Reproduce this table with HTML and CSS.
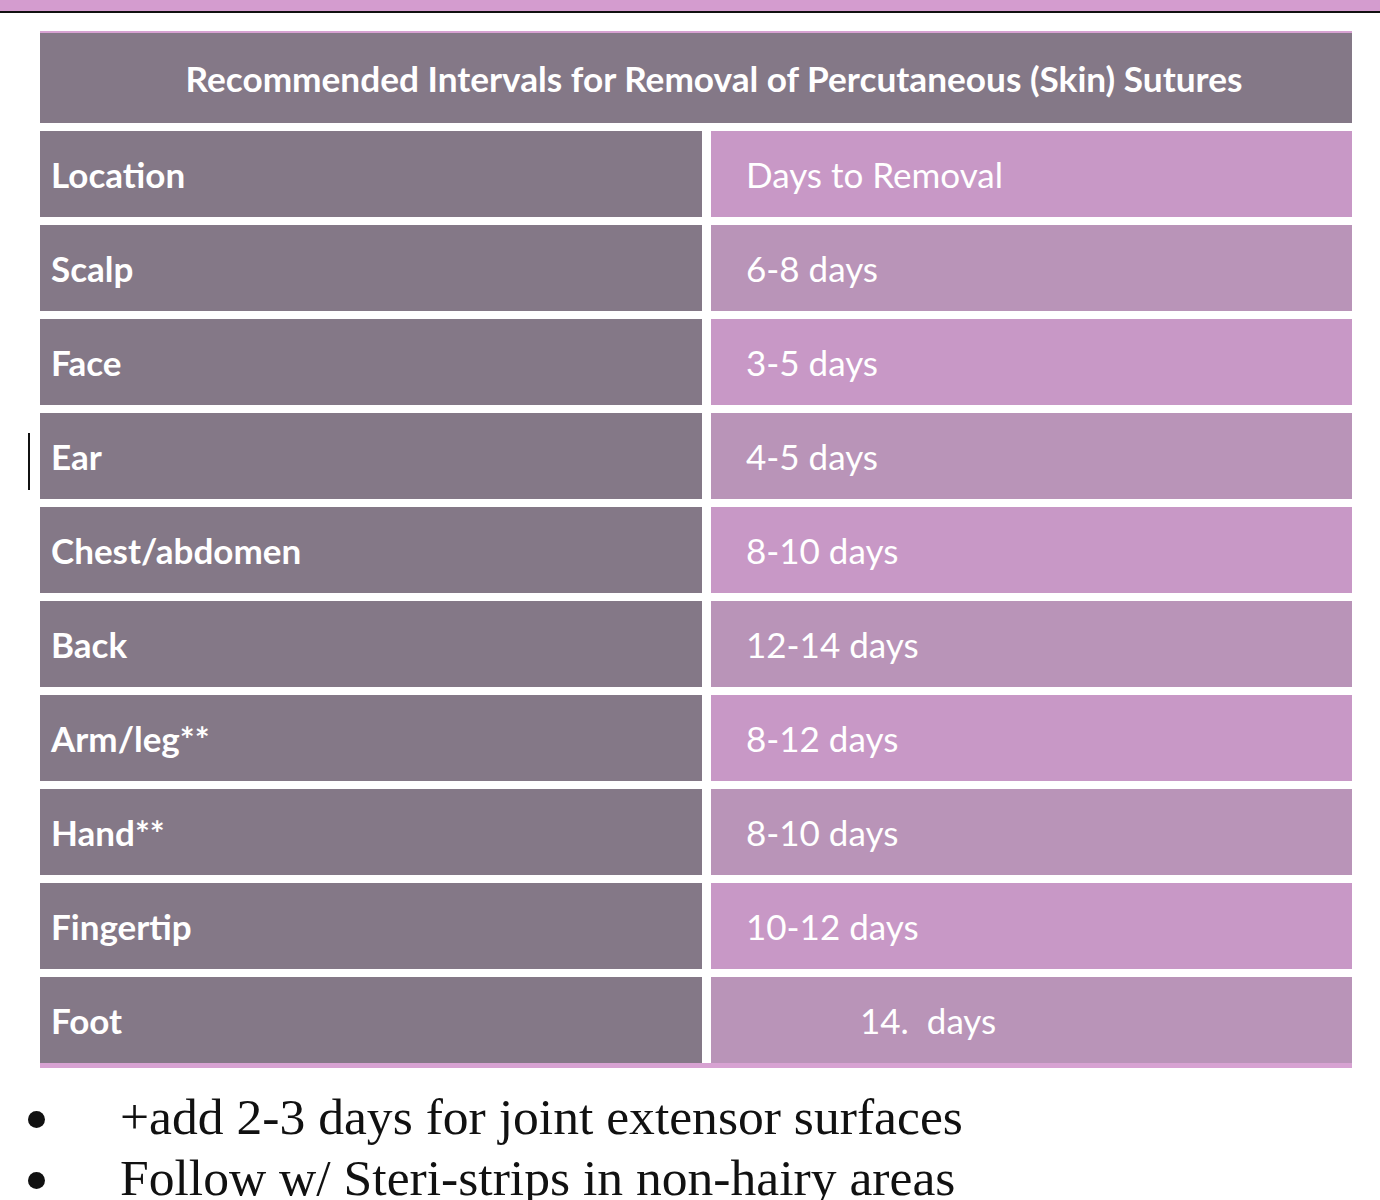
FILE: index.html
```html
<!DOCTYPE html>
<html>
<head>
<meta charset="utf-8">
<link rel="stylesheet" href="styles.css">
</head>
<body>
<div class="topbar"></div>
<div class="page">
  <div class="cursor"></div>
  <div class="table">
    <div class="cell title">Recommended Intervals for Removal of Percutaneous (Skin) Sutures</div>
    <div class="cell loc">Location</div><div class="cell days bright">Days to Removal</div>
    <div class="cell loc">Scalp</div><div class="cell days muted">6-8 days</div>
    <div class="cell loc">Face</div><div class="cell days bright">3-5 days</div>
    <div class="cell loc">Ear</div><div class="cell days muted">4-5 days</div>
    <div class="cell loc">Chest/abdomen</div><div class="cell days bright">8-10 days</div>
    <div class="cell loc">Back</div><div class="cell days muted">12-14 days</div>
    <div class="cell loc">Arm/leg**</div><div class="cell days bright">8-12 days</div>
    <div class="cell loc">Hand**</div><div class="cell days muted">8-10 days</div>
    <div class="cell loc">Fingertip</div><div class="cell days bright">10-12 days</div>
    <div class="cell loc">Foot</div><div class="cell days muted foot">14.&nbsp;&nbsp;days</div>
  </div>
  <ul class="notes">
    <li><span class="note-text">+add 2-3 days for joint extensor surfaces</span></li>
    <li><span class="note-text">Follow w/ <span class="spell">Steri</span>-strips in non-hairy areas</span></li>
  </ul>
</div>
</body>
</html>
```
FILE: styles.css
```css
html, body {
  margin: 0;
  padding: 0;
  background: #ffffff;
}
.topbar {
  height: 11px;
  background: #d49ccf;
  border-bottom: 2px solid #111111;
}
.page {
  position: relative;
  padding: 18px 28px 0 40px;
}
.cursor {
  position: absolute;
  left: 28px;
  top: 420px;
  width: 2px;
  height: 57px;
  background: #111111;
}
.table {
  display: grid;
  grid-template-columns: 662px 1fr;
  column-gap: 9px;
  row-gap: 8px;
  border-top: 2px solid #d7a2d2;
  border-bottom: 5px solid #d7a2d2;
  font-family: "Lato", "Open Sans", sans-serif;
  color: #ffffff;
}
.cell {
  height: 86px;
  display: flex;
  align-items: center;
  font-size: 35px;
}
.title {
  grid-column: 1 / 3;
  height: 90px;
  background: #847887;
  justify-content: center;
  padding-left: 36px;
  font-weight: 700;
  font-size: 35.2px;
}
.loc {
  background: #847887;
  font-weight: 700;
  padding-left: 11px;
}
.days {
  padding-left: 35px;
  font-weight: 400;
}
.bright {
  background: #c898c6;
}
.muted {
  background: #b994b8;
}
.foot {
  padding-left: 149px;
}
.notes {
  list-style: none;
  margin: 18px 0 0 -12px;
  padding: 0;
  font-family: "Liberation Serif", "Times New Roman", serif;
  font-size: 51.6px;
  line-height: 61px;
  color: #111111;
}
.notes li {
  display: flex;
  align-items: center;
}
.notes li::before {
  content: "";
  flex: none;
  width: 17px;
  height: 17px;
  border-radius: 50%;
  background: #111111;
  margin-right: 75px;
  margin-top: 6px;
}
.spell {
  text-decoration: underline wavy #e02020;
  text-decoration-thickness: 2px;
  text-underline-offset: 10px;
}
```
